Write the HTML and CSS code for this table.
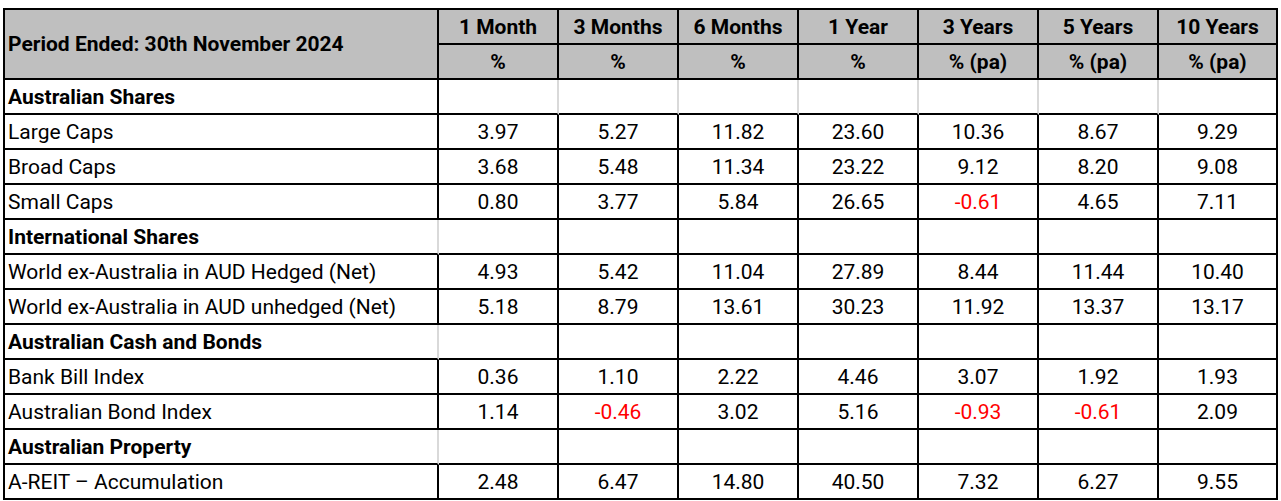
FILE: index.html
```html
<!DOCTYPE html>
<html lang="en">
<head>
<meta charset="utf-8">
<title>Period Returns</title>
<link rel="stylesheet" href="styles.css">
</head>
<body>
<div class="grid">
  <div class="c head label period">Period Ended: 30th November 2024</div>
  <div class="c head">1 Month</div>
  <div class="c head">3 Months</div>
  <div class="c head">6 Months</div>
  <div class="c head">1 Year</div>
  <div class="c head">3 Years</div>
  <div class="c head">5 Years</div>
  <div class="c head">10 Years</div>
  <div class="c head">%</div>
  <div class="c head">%</div>
  <div class="c head">%</div>
  <div class="c head">%</div>
  <div class="c head">% (pa)</div>
  <div class="c head">% (pa)</div>
  <div class="c head">% (pa)</div>

  <div class="c label sec">Australian Shares</div>
  <div class="c light"></div><div class="c light"></div><div class="c light"></div><div class="c light"></div><div class="c light"></div><div class="c light"></div><div class="c"></div>

  <div class="c label">Large Caps</div>
  <div class="c">3.97</div><div class="c">5.27</div><div class="c">11.82</div><div class="c">23.60</div><div class="c">10.36</div><div class="c">8.67</div><div class="c">9.29</div>

  <div class="c label">Broad Caps</div>
  <div class="c">3.68</div><div class="c">5.48</div><div class="c">11.34</div><div class="c">23.22</div><div class="c">9.12</div><div class="c">8.20</div><div class="c">9.08</div>

  <div class="c label">Small Caps</div>
  <div class="c">0.80</div><div class="c">3.77</div><div class="c">5.84</div><div class="c">26.65</div><div class="c neg">-0.61</div><div class="c">4.65</div><div class="c">7.11</div>

  <div class="c label sec light">International Shares</div>
  <div class="c"></div><div class="c"></div><div class="c"></div><div class="c"></div><div class="c"></div><div class="c"></div><div class="c"></div>

  <div class="c label">World ex-Australia in AUD Hedged (Net)</div>
  <div class="c">4.93</div><div class="c">5.42</div><div class="c">11.04</div><div class="c">27.89</div><div class="c">8.44</div><div class="c">11.44</div><div class="c">10.40</div>

  <div class="c label">World ex-Australia in AUD unhedged (Net)</div>
  <div class="c">5.18</div><div class="c">8.79</div><div class="c">13.61</div><div class="c">30.23</div><div class="c">11.92</div><div class="c">13.37</div><div class="c">13.17</div>

  <div class="c label sec light">Australian Cash and Bonds</div>
  <div class="c"></div><div class="c"></div><div class="c"></div><div class="c"></div><div class="c"></div><div class="c"></div><div class="c"></div>

  <div class="c label">Bank Bill Index</div>
  <div class="c">0.36</div><div class="c">1.10</div><div class="c">2.22</div><div class="c">4.46</div><div class="c">3.07</div><div class="c">1.92</div><div class="c">1.93</div>

  <div class="c label">Australian Bond Index</div>
  <div class="c">1.14</div><div class="c neg">-0.46</div><div class="c">3.02</div><div class="c">5.16</div><div class="c neg">-0.93</div><div class="c neg">-0.61</div><div class="c">2.09</div>

  <div class="c label sec light">Australian Property</div>
  <div class="c"></div><div class="c"></div><div class="c"></div><div class="c"></div><div class="c"></div><div class="c"></div><div class="c"></div>

  <div class="c label">A-REIT – Accumulation</div>
  <div class="c">2.48</div><div class="c">6.47</div><div class="c">14.80</div><div class="c">40.50</div><div class="c">7.32</div><div class="c">6.27</div><div class="c">9.55</div>
</div>
</body>
</html>
```
FILE: styles.css
```css
html, body {
  margin: 0;
  padding: 0;
  background: #ffffff;
}

body {
  font-family: Roboto, "Liberation Sans", Arial, sans-serif;
  color: #000000;
}

.grid {
  display: grid;
  grid-template-columns: 434px repeat(6, 120px) 119px;
  grid-auto-rows: 35px;
  width: max-content;
  margin: 8px 0 0 3px;
  border-left: 2px solid #000;
  border-top: 2px solid #000;
}

.c {
  box-sizing: border-box;
  border-right: 2px solid #000;
  border-bottom: 2px solid #000;
  display: flex;
  align-items: center;
  justify-content: center;
  font-size: 21px;
  line-height: 24px;
  white-space: nowrap;
}

.label {
  justify-content: flex-start;
  padding-left: 3px;
}

.head {
  background: #bfbfbf;
  font-weight: 700;
}

.period {
  grid-row: span 2;
}

.sec {
  font-weight: 700;
}

.light {
  border-right-color: #d9d9d9;
}

.neg {
  color: #ff0000;
}
```
